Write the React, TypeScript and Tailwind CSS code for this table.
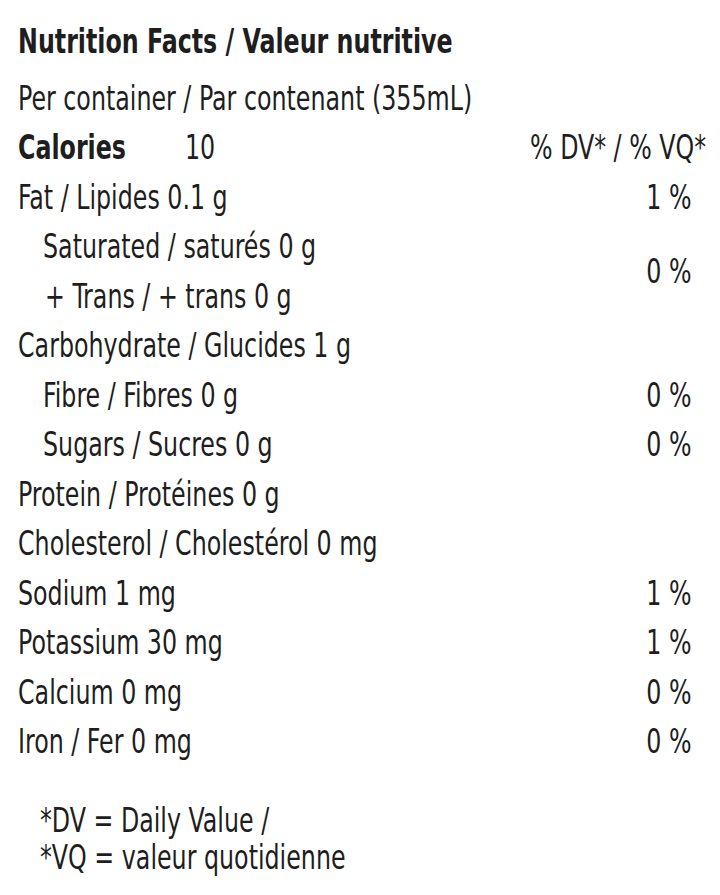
type Item = { label: string; dv?: string; indent?: boolean };

const top: Item[] = [{ label: "Fat / Lipides 0.1 g", dv: "1 %" }];

const rest: Item[] = [
  { label: "Carbohydrate / Glucides 1 g" },
  { label: "Fibre / Fibres 0 g", dv: "0 %", indent: true },
  { label: "Sugars / Sucres 0 g", dv: "0 %", indent: true },
  { label: "Protein / Protéines 0 g" },
  { label: "Cholesterol / Cholestérol 0 mg" },
  { label: "Sodium 1 mg", dv: "1 %" },
  { label: "Potassium 30 mg", dv: "1 %" },
  { label: "Calcium 0 mg", dv: "0 %" },
  { label: "Iron / Fer 0 mg", dv: "0 %" },
];

// condensed look: squeeze the glyphs horizontally
function L({ children, className = "" }: { children: React.ReactNode; className?: string }) {
  return <span className={`inline-block origin-left scale-x-[0.8] whitespace-nowrap ${className}`}>{children}</span>;
}
function R({ children }: { children: React.ReactNode }) {
  return <span className="inline-block origin-right scale-x-[0.8] whitespace-nowrap">{children}</span>;
}

function Row({ label, dv, indent }: Item) {
  return (
    <div className={`flex h-[49.5px] items-center justify-between pr-[28px] ${indent ? "pl-[43px]" : "pl-[18px]"}`}>
      <L>{label}</L>
      {dv && <R>{dv}</R>}
    </div>
  );
}

export default function App() {
  return (
    <div
      className="min-h-[895px] w-[720px] overflow-hidden bg-white pt-[17px] text-[33px] leading-[50px] text-[#1e1e1e] [font-stretch:condensed]"
      style={{ fontFamily: '"DejaVu Sans Condensed", "Liberation Sans", sans-serif' }}
    >
      <div className="mb-[7px] pl-[18px] font-bold">
        <L>Nutrition Facts / Valeur nutritive</L>
      </div>
      <div className="h-[49.5px] pl-[18px]">
        <L>Per container / Par contenant (355mL)</L>
      </div>

      {/* calories + header */}
      <div className="flex h-[49.5px] items-center justify-between pl-[18px] pr-[14px]">
        <div className="flex">
          <span className="w-[167px]">
            <L className="font-bold">Calories</L>
          </span>
          <L>10</L>
        </div>
        <R>% DV* / % VQ*</R>
      </div>

      {top.map((r) => (
        <Row key={r.label} {...r} />
      ))}

      {/* saturated + trans share one % */}
      <div className="flex items-center justify-between pr-[28px]">
        <div className="flex flex-col">
          <div className="flex h-[49.5px] items-center pl-[43px]">
            <L>Saturated / saturés 0 g</L>
          </div>
          <div className="flex h-[49.5px] items-center pl-[45px]">
            <L>+ Trans / + trans 0 g</L>
          </div>
        </div>
        <R>0 %</R>
      </div>

      {rest.map((r) => (
        <Row key={r.label} {...r} />
      ))}

      <div className="mt-[35px] pl-[40px] leading-[37px]">
        <div>
          <L>*DV = Daily Value /</L>
        </div>
        <div>
          <L>*VQ = valeur quotidienne</L>
        </div>
      </div>
    </div>
  );
}
